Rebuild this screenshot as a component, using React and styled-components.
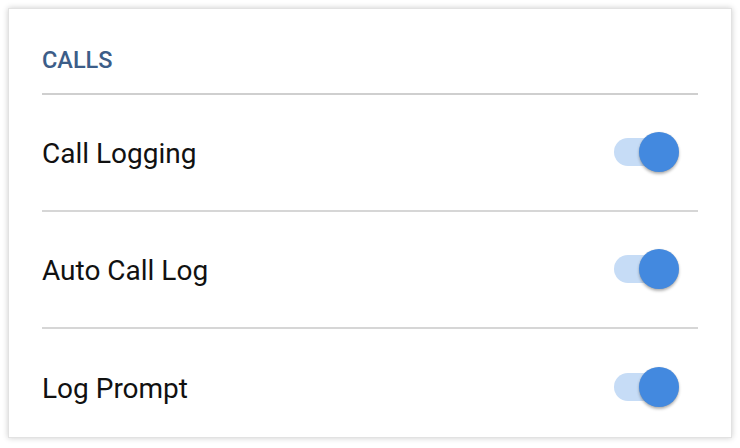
import React, { useState } from 'react'
import styled, { createGlobalStyle } from 'styled-components'

const GlobalStyle = createGlobalStyle`
    html, body {
        margin: 0;
        padding: 0;
        background: #ffffff;
        font-family: Roboto, "Liberation Sans", sans-serif;
    }
`

const settings = [
    { id: 'logging', label: 'Call Logging' },
    { id: 'auto', label: 'Auto Call Log' },
    { id: 'prompt', label: 'Log Prompt' },
]

function Toggle({ on, onClick }) {
    return (
        <SwitchWrap onClick={onClick} role="switch" aria-checked={on}>
            <Track on={on ? 1 : 0} />
            <Knob on={on ? 1 : 0} />
        </SwitchWrap>
    )
}

function App() {
    const [values, setValues] = useState({ logging: true, auto: true, prompt: true })
    const flip = (id) => setValues({ ...values, [id]: !values[id] })

    return (
        <Page>
            <GlobalStyle />
            <Card>
                <Header>
                    <Title>CALLS</Title>
                </Header>
                {settings.map((s) => (
                    <Row key={s.id}>
                        <Label>{s.label}</Label>
                        <Toggle on={values[s.id]} onClick={() => flip(s.id)} />
                    </Row>
                ))}
            </Card>
        </Page>
    )
}

const Page = styled.div`
    padding: 8px;
`
const Card = styled.div`
    height: 430px;
    box-sizing: border-box;
    border: 1px solid #e2e2e2;
    box-shadow: 0 0 6px rgba(0, 0, 0, 0.2);
    background: #fff;
    padding: 0 33px;
    overflow: hidden;
`
const Header = styled.div`
    padding: 40px 0 20px;
    border-bottom: 2px solid #cfcfcf;
`
const Title = styled.h2`
    margin: 0;
    font-size: 23.5px;
    line-height: 1;
    font-weight: 500;
    color: #3c5d88;
`
const Row = styled.div`
    display: flex;
    align-items: center;
    justify-content: space-between;
    height: 117px;
    box-sizing: border-box;
    border-bottom: 2px solid #d6d6d6;
    &:last-child {
        border-bottom: none;
    }
`
const Label = styled.span`
    font-size: 28px;
    color: #111;
    line-height: 1;
    padding-top: 3px;
`
const SwitchWrap = styled.div`
    position: relative;
    width: 65px;
    height: 40px;
    margin-right: 19px;
    display: flex;
    align-items: center;
    cursor: pointer;
`
const Track = styled.div`
    width: 58px;
    height: 28px;
    border-radius: 14px;
    background: ${(p) => (p.on ? '#c6dcf6' : '#d8d8d8')};
`
const Knob = styled.div`
    position: absolute;
    top: 0;
    ${(p) => (p.on ? 'right: 0;' : 'left: -6px;')}
    width: 40px;
    height: 40px;
    border-radius: 50%;
    background: ${(p) => (p.on ? '#4389df' : '#f5f5f5')};
    box-shadow: 0 2px 3px rgba(0, 0, 0, 0.3), 0 0 1px rgba(0, 0, 0, 0.15);
`

export default App
